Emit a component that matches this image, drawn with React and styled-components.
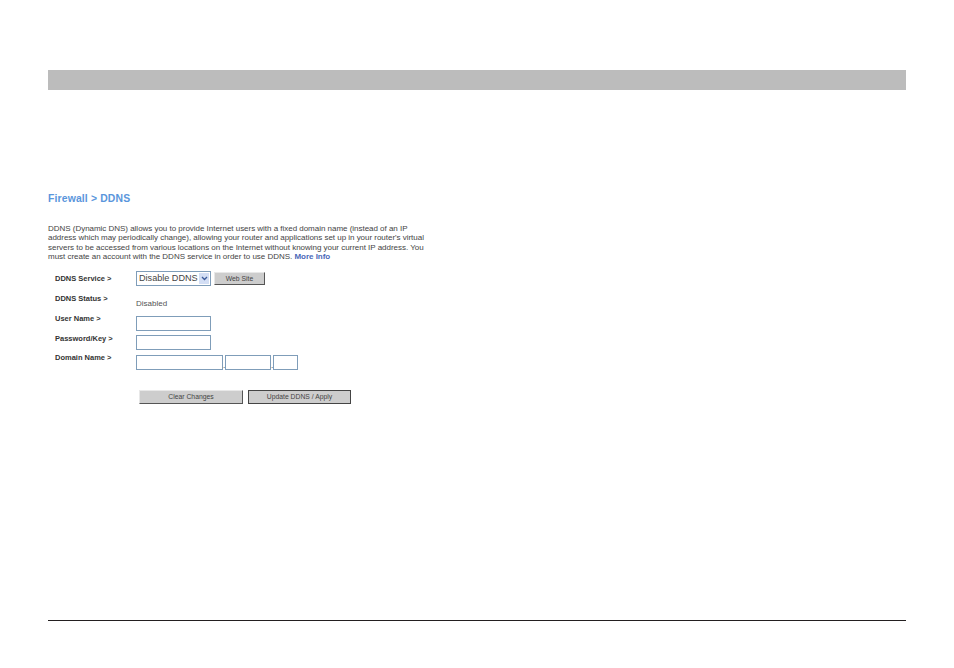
import React from "react";
import styled, { createGlobalStyle } from "styled-components";

const Global = createGlobalStyle`
  html, body {
    margin: 0;
    padding: 0;
    background: #fff;
  }
  body {
    font-family: "Liberation Sans", Arial, sans-serif;
  }
`;

const Page = styled.div`
  width: 954px;
  height: 668px;
  box-sizing: border-box;
  padding: 70px 48px 0;
  display: flex;
  flex-direction: column;
`;

const TopBar = styled.div`
  height: 20px;
  background: #bcbcbc;
`;

const Content = styled.div`
  width: 378px;
  height: 530px;
  padding-top: 103px;
  box-sizing: border-box;
`;

const Title = styled.h1`
  margin: 0;
  font-size: 10.4px;
  line-height: 11px;
  font-weight: 700;
  letter-spacing: 0.15px;
  color: #5a96dc;
`;

const Intro = styled.p`
  margin: 20px 0 0;
  font-size: 8px;
  line-height: 9.4px;
  letter-spacing: -0.025px;
  color: #444;
  white-space: nowrap;
`;

const MoreInfo = styled.a`
  color: #4a68b8;
  font-weight: 700;
`;

const Form = styled.div`
  margin-top: 9px;
  padding-left: 7px;
  display: flex;
  flex-direction: column;
`;

const Row = styled.div`
  display: grid;
  grid-template-columns: 81px 1fr;
  height: ${(p) => p.$h}px;
`;

const Label = styled.div`
  font-size: 7.5px;
  line-height: 9px;
  font-weight: 700;
  color: #333;
  padding-top: ${(p) => p.$top || 0}px;
`;

const Field = styled.div`
  display: flex;
  align-items: flex-start;
  padding-top: ${(p) => p.$top || 0}px;
  gap: ${(p) => p.$gap || 0}px;
`;

const Select = styled.div`
  width: 75px;
  height: 15px;
  box-sizing: border-box;
  border: 1px solid #7f9db9;
  display: flex;
  align-items: center;
  justify-content: space-between;
  padding: 0 1px 0 2px;
  font-size: 9.1px;
  color: #444;
  background: #fff;
  white-space: nowrap;
`;

const SelectArrow = styled.span`
  width: 10px;
  height: 11px;
  background: #d3def4;
  display: flex;
  align-items: center;
  justify-content: center;
`;

const StatusText = styled.span`
  font-size: 8px;
  line-height: 10px;
  color: #555;
  padding-top: 5px;
`;

const TextBox = styled.div`
  width: ${(p) => p.$w}px;
  height: 15px;
  box-sizing: border-box;
  border: 1px solid #7f9db9;
  background: #fff;
`;

const Dot = styled.span`
  width: 2px;
  height: 15px;
  display: flex;
  align-items: flex-end;
  justify-content: center;
  font-size: 8px;
  line-height: 8px;
  color: #222;
`;

const Button = styled.button`
  width: ${(p) => p.$w}px;
  height: ${(p) => p.$h || 14}px;
  margin-top: ${(p) => p.$top || 0}px;
  box-sizing: border-box;
  padding: 0;
  background: #cdcdcd;
  border: 1px solid;
  border-color: #e8e8e8 #555 #555 #e8e8e8;
  outline: ${(p) => (p.$dark ? "1px solid #444" : "none")};
  outline-offset: -1px;
  font-family: inherit;
  font-size: 6.8px;
  color: #444;
`;

const Actions = styled.div`
  margin: 20px 0 0 84px;
  display: flex;
  gap: 5px;
`;

const BottomLine = styled.div`
  height: 1px;
  background: #231f20;
`;

export default function App() {
  return (
    <Page>
      <Global />
      <TopBar />
      <Content>
        <Title>Firewall &gt; DDNS</Title>
        <Intro>
          DDNS (Dynamic DNS) allows you to provide Internet users with a fixed domain name (instead of an IP
          <br />
          address which may periodically change), allowing your router and applications set up in your router's virtual
          <br />
          servers to be accessed from various locations on the Internet without knowing your current IP address. You
          <br />
          must create an account with the DDNS service in order to use DDNS. <MoreInfo>More Info</MoreInfo>
        </Intro>
        <Form>
          <Row $h={23}>
            <Label $top={3}>DDNS Service &gt;</Label>
            <Field $gap={3}>
              <Select>
                Disable DDNS
                <SelectArrow>
                  <svg width="7" height="5" viewBox="0 0 7 5">
                    <path d="M1 1l2.5 2.5L6 1" fill="none" stroke="#3a5a9a" strokeWidth="1.3" />
                  </svg>
                </SelectArrow>
              </Select>
              <Button $w={51} $h={13} $top={1}>Web Site</Button>
            </Field>
          </Row>
          <Row $h={20}>
            <Label>DDNS Status &gt;</Label>
            <Field>
              <StatusText>Disabled</StatusText>
            </Field>
          </Row>
          <Row $h={20}>
            <Label>User Name &gt;</Label>
            <Field $top={2}>
              <TextBox $w={75} />
            </Field>
          </Row>
          <Row $h={19}>
            <Label>Password/Key &gt;</Label>
            <Field $top={1}>
              <TextBox $w={75} />
            </Field>
          </Row>
          <Row $h={17}>
            <Label>Domain Name &gt;</Label>
            <Field $top={2}>
              <TextBox $w={87} />
              <Dot>.</Dot>
              <TextBox $w={46} />
              <Dot>.</Dot>
              <TextBox $w={25} />
            </Field>
          </Row>
          <Actions>
            <Button $w={104}>Clear Changes</Button>
            <Button $w={103} $dark>Update DDNS / Apply</Button>
          </Actions>
        </Form>
      </Content>
      <BottomLine />
    </Page>
  );
}
